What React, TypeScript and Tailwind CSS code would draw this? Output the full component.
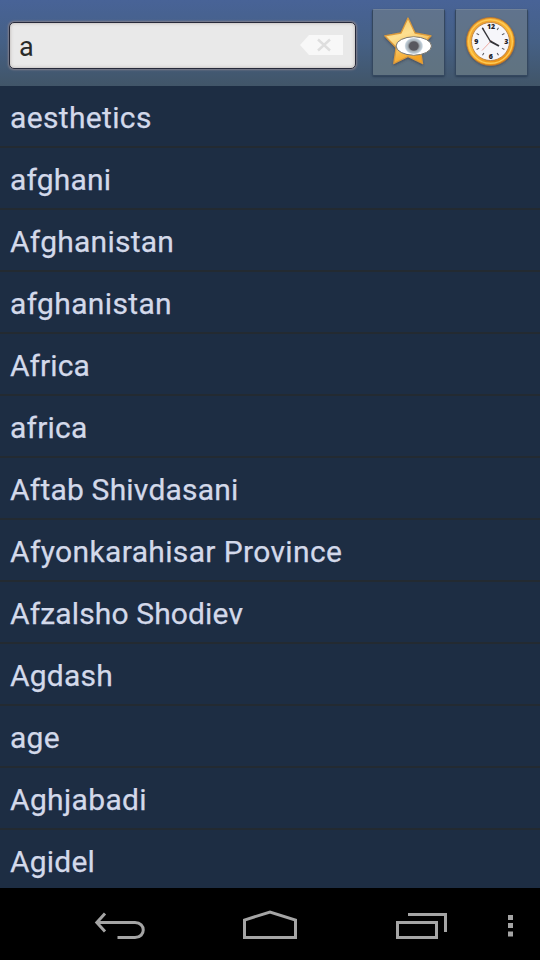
const words = [
  { text: "aesthetics", tracking: "tracking-[0.35px]" },
  { text: "afghani", tracking: "tracking-[0.2px]" },
  { text: "Afghanistan", tracking: "tracking-[0.25px]" },
  { text: "afghanistan", tracking: "tracking-[0.35px]" },
  { text: "Africa", tracking: "tracking-[0.05px]" },
  { text: "africa", tracking: "tracking-[0.2px]" },
  { text: "Aftab Shivdasani", tracking: "tracking-[0.2px]" },
  { text: "Afyonkarahisar Province", tracking: "tracking-[0.36px]" },
  { text: "Afzalsho Shodiev", tracking: "tracking-[0.13px]" },
  { text: "Agdash", tracking: "tracking-[0.2px]" },
  { text: "age", tracking: "tracking-[0.3px]" },
  { text: "Aghjabadi", tracking: "tracking-[0.35px]" },
  { text: "Agidel", tracking: "tracking-[0.2px]" },
];

function ClearIcon() {
  return (
    <svg width="44" height="22" viewBox="0 0 44 22">
      <path d="M0 11 L9 1 H43 V21 H9 Z" fill="#f8f8f8" />
      <path d="M18 5.5 L30 16.5 M30 5.5 L18 16.5" stroke="#dedede" strokeWidth="2.4" />
    </svg>
  );
}

function StarIcon() {
  return (
    <svg width="54" height="54" viewBox="0 0 54 54">
      <defs>
        <linearGradient id="star" x1="0" y1="0" x2="0.4" y2="1">
          <stop offset="0" stopColor="#f8c75c" />
          <stop offset="0.45" stopColor="#fde092" />
          <stop offset="1" stopColor="#f5a321" />
        </linearGradient>
        <radialGradient id="iris">
          <stop offset="0" stopColor="#505058" />
          <stop offset="0.45" stopColor="#64656c" />
          <stop offset="0.65" stopColor="#aab3b9" />
          <stop offset="0.85" stopColor="#bccbd6" />
          <stop offset="1" stopColor="#ffffff" />
        </radialGradient>
        <filter id="starShadow" x="-20%" y="-20%" width="140%" height="140%">
          <feDropShadow dx="0" dy="1.5" stdDeviation="1" floodColor="#303845" floodOpacity="0.6" />
        </filter>
      </defs>
      <path
        d="M26 3 L33 18 L49 20.8 L38 32.5 L40.5 48.5 L26 41.5 L11.8 48.5 L14.2 32.5 L2.8 20.8 L19 18 Z"
        fill="url(#star)"
        stroke="#dc9a3a"
        strokeWidth="1.3"
        strokeLinejoin="round"
        filter="url(#starShadow)"
      />
      <ellipse cx="31.8" cy="31" rx="17.7" ry="9.2" fill="#ffffff" stroke="#77736b" strokeWidth="1" />
      <ellipse cx="31.8" cy="31" rx="9.5" ry="8.5" fill="url(#iris)" />
      <circle cx="31.8" cy="31" r="4.6" fill="#58585f" />
    </svg>
  );
}

function ClockIcon() {
  return (
    <svg className="mr-[2px]" width="54" height="54" viewBox="0 0 54 54">
      <defs>
        <linearGradient id="rim" x1="0.2" y1="0" x2="0.7" y2="1">
          <stop offset="0" stopColor="#ec9b2e" />
          <stop offset="0.5" stopColor="#fbb832" />
          <stop offset="1" stopColor="#e98c12" />
        </linearGradient>
        <filter id="clockShadow" x="-20%" y="-20%" width="140%" height="140%">
          <feDropShadow dx="0" dy="1" stdDeviation="1" floodColor="#303845" floodOpacity="0.6" />
        </filter>
      </defs>
      <circle cx="26.5" cy="26.5" r="24" fill="url(#rim)" stroke="#b8732a" strokeWidth="0.8" filter="url(#clockShadow)" />
      <circle cx="26.5" cy="26.5" r="21.8" fill="none" stroke="#fdca55" strokeWidth="1.4" />
      <circle cx="26.5" cy="26.5" r="19" fill="#f6f6fa" stroke="#bb8140" strokeWidth="0.9" />
      <g stroke="#55555b" strokeWidth="1">
        {[30, 60, 120, 150, 210, 240, 300, 330].map((angle) => (
          <line key={angle} x1="26.5" y1="10.5" x2="26.5" y2="13.3" transform={`rotate(${angle} 26.5 26.5)`} />
        ))}
      </g>
      <g fontFamily="Open Sans, sans-serif" fontSize="7" fontWeight="800" fill="#222228" textAnchor="middle">
        <text x="27" y="14.3">12</text>
        <text x="42.3" y="29">3</text>
        <text x="26.7" y="44.4">6</text>
        <text x="12.2" y="29">9</text>
      </g>
      <path d="M27.5 25.5 L18 35.5" stroke="#eda49b" strokeWidth="0.9" />
      <path d="M26.5 26.5 L18.3 12.8" stroke="#333338" strokeWidth="1.4" />
      <path d="M26 26.2 L35 31" stroke="#333338" strokeWidth="1.9" />
    </svg>
  );
}

function Header() {
  const button =
    "flex h-[67px] w-[73px] items-center justify-center rounded-[2px] border border-[#34475f] border-t-[#718298] bg-linear-to-b from-[#60738d] to-[#607380] pb-[1px] shadow-[0_1px_2px_rgba(20,35,55,0.5)]";
  return (
    <header className="flex h-[86px] items-start bg-linear-to-b from-[#486397] via-[#456085] to-[#415568] pt-[9px] pl-[9px]">
      <div className="mt-[13px] flex h-[47px] w-[347px] items-center justify-between rounded-[5px] border border-[#25293a] bg-[#e9e9e9] pr-[11px] pb-[2px] pl-[9px] shadow-[0_0_2px_1px_#817f8b,inset_0_0_3px_1px_#c9c5c3]">
        <span className="mt-[4px] text-[27px] leading-8 text-[#292b29]">a</span>
        <ClearIcon />
      </div>
      <button className={`ml-[16px] ${button}`}>
        <StarIcon />
      </button>
      <button className={`ml-[10px] ${button}`}>
        <ClockIcon />
      </button>
    </header>
  );
}

function NavBar() {
  return (
    <nav className="h-[72px] shrink-0 bg-black">
      <svg width="540" height="72" viewBox="0 0 540 72" fill="none" stroke="#a5a5a5" strokeWidth="3">
        {/* Back */}
        <path d="M97 34.5 H135 C146 34.5 146 49.5 135 49.5 H117.5" />
        <path d="M105 25.5 L96.8 34.5 L105 43.5" />
        {/* Home */}
        <path d="M244.5 49.5 V32 L270 24 L295.5 32 V49.5 Z" />
        {/* Recent apps */}
        <path d="M397.5 34.5 H436.5 V49.5 H397.5 Z" />
        <path d="M408 26.5 H445.5 V44" />
        {/* Menu */}
        <path d="M508 29.5 H513 M508 37.5 H513 M508 46 H513" strokeWidth="5" />
      </svg>
    </nav>
  );
}

export default function App() {
  return (
    <div className="flex h-[960px] w-[540px] flex-col overflow-hidden bg-[#1d2d43] font-['Roboto','Noto_Sans',sans-serif]">
      <Header />
      <ul className="min-h-0 flex-1 overflow-hidden">
        {words.map((word) => (
          <li
            key={word.text}
            className={`h-[62px] border-b-2 border-[#232a31] pt-[2px] pl-[10px] text-[30px] leading-[60px] whitespace-nowrap text-[#d3d9ea] [-webkit-text-stroke:0.25px_#d3d9ea] ${word.tracking}`}
          >
            {word.text}
          </li>
        ))}
      </ul>
      <NavBar />
    </div>
  );
}
